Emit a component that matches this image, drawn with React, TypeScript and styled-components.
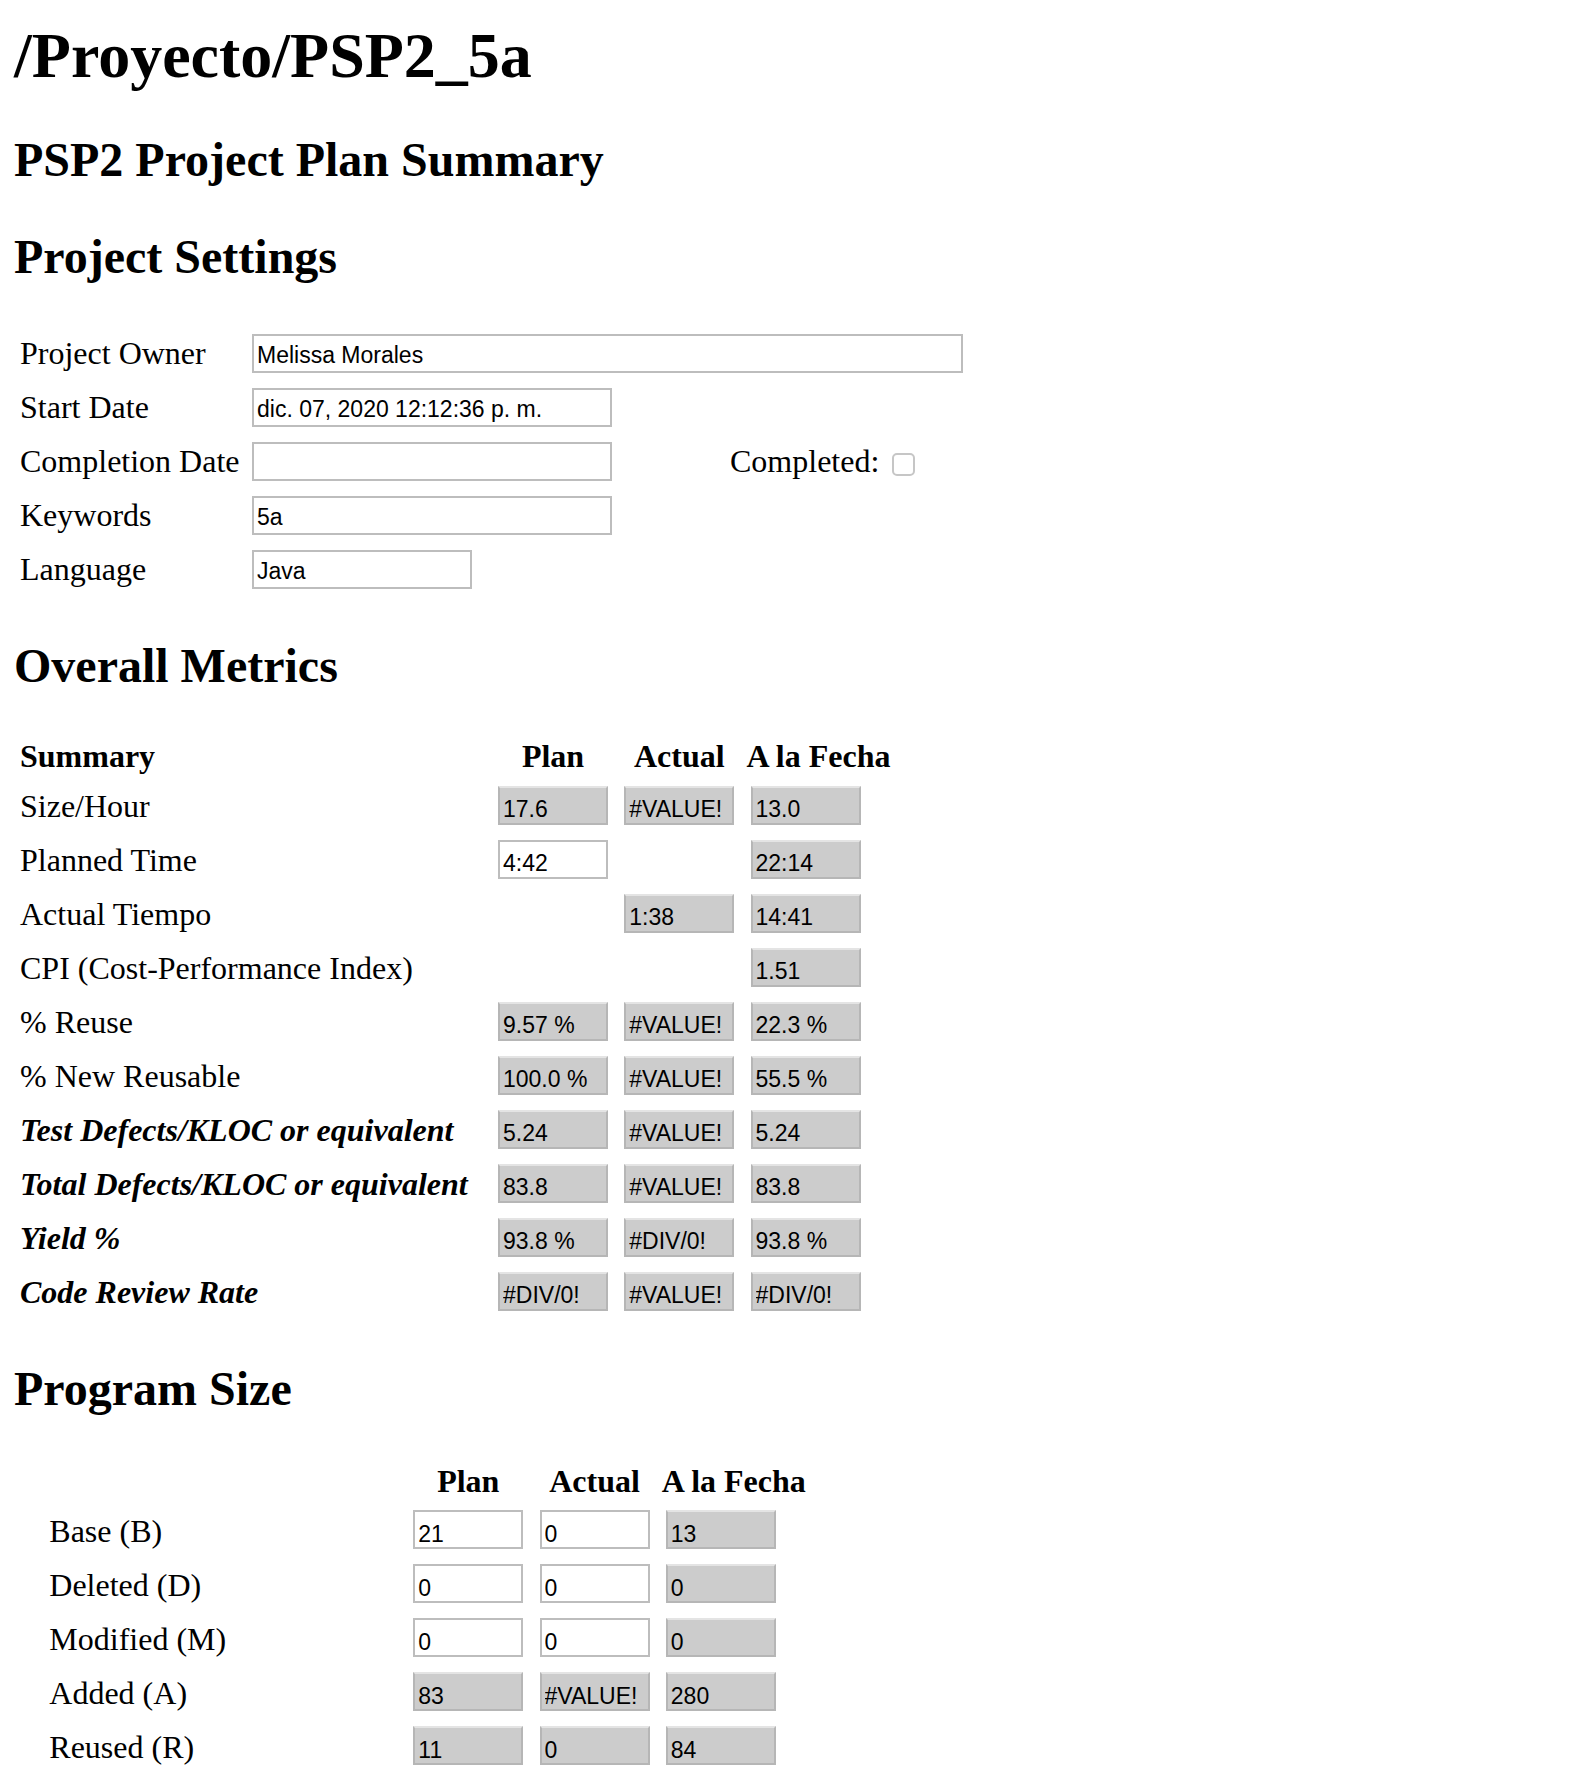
import React from "react";
import styled, { createGlobalStyle } from "styled-components";

const GlobalStyle = createGlobalStyle`
  html, body {
    margin: 0;
    padding: 0;
    background: #ffffff;
  }
  body {
    font-family: "Liberation Serif", "Times New Roman", serif;
    color: #000000;
  }
`;

const Page = styled.div`
  padding: 0 16px;
`;

const Title = styled.h1`
  margin: 20px 0 0 -2px;
  font-size: 64px;
  line-height: 72px;
  font-weight: 700;
`;

const Heading = styled.h2<{ $mt: number }>`
  margin: ${(p) => p.$mt}px 0 0 -2px;
  font-size: 48px;
  line-height: 54px;
  font-weight: 700;
`;

const SettingsGrid = styled.div`
  margin-top: 42px;
  padding-left: 4px;
  display: grid;
  grid-template-columns: 232px 360px auto;
  grid-auto-rows: 54px;
  align-items: center;
  justify-items: start;
  justify-content: start;
`;

const FieldLabel = styled.div`
  font-size: 32px;
  line-height: 36px;
  white-space: nowrap;
`;

const TextField = styled.input<{ $w: number; $span?: boolean }>`
  box-sizing: border-box;
  width: ${(p) => p.$w}px;
  height: 39px;
  margin: 0;
  padding: 7px 3px 2px;
  font-family: "Liberation Sans", Arial, sans-serif;
  font-size: 23px;
  line-height: 26px;
  color: #000;
  background: #fff;
  border: 2px solid #bdbdbd;
  border-radius: 0;
  outline: none;
  grid-column: ${(p) => (p.$span ? "2 / 4" : "auto")};
`;

const CompletedCell = styled.div`
  display: flex;
  align-items: center;
  gap: 13px;
  margin-left: 118px;
  font-size: 32px;
  line-height: 36px;
`;

const Checkbox = styled.input`
  appearance: none;
  -webkit-appearance: none;
  box-sizing: border-box;
  width: 23px;
  height: 23px;
  margin: 6px 0 0;
  border: 2px solid #c6c6c6;
  border-radius: 5px;
  background: #fff;
`;

const DataGrid = styled.div<{ $labelW: number; $indent: number; $headH: number; $mt: number }>`
  margin-top: ${(p) => p.$mt}px;
  padding-left: ${(p) => p.$indent}px;
  display: grid;
  grid-template-columns: ${(p) => p.$labelW}px 118px 118px max-content;
  grid-template-rows: ${(p) => p.$headH}px;
  grid-auto-rows: 54px;
  column-gap: 8.25px;
  align-items: center;
  justify-content: start;
`;

const ColHead = styled.div<{ $left?: boolean }>`
  align-self: start;
  font-size: 32px;
  line-height: 36px;
  font-weight: 700;
  text-align: ${(p) => (p.$left ? "left" : "center")};
  white-space: nowrap;
`;

const RowLabel = styled.div<{ $emph?: boolean }>`
  margin-top: 2px;
  font-size: 32px;
  line-height: 36px;
  white-space: nowrap;
  font-weight: ${(p) => (p.$emph ? 700 : 400)};
  font-style: ${(p) => (p.$emph ? "italic" : "normal")};
`;

const Cell = styled.input<{ $gray: boolean }>`
  box-sizing: border-box;
  width: 110px;
  height: 39px;
  margin: 0 0 0 4px;
  padding: 9px 3px 0;
  font-family: "Liberation Sans", Arial, sans-serif;
  font-size: 23px;
  line-height: 26px;
  color: #000;
  background: ${(p) => (p.$gray ? "#cccccc" : "#ffffff")};
  border: 2px solid ${(p) => (p.$gray ? "#b6b6b6" : "#bdbdbd")};
  border-top-color: ${(p) => (p.$gray ? "#e4e4e4" : "#bdbdbd")};
  border-radius: 0;
  outline: none;
`;

const EmptyCell = styled.div``;

type CellDef = { v: string; gray: boolean } | null;
type RowDef = { label: string; emph?: boolean; cells: CellDef[] };

const g = (v: string): CellDef => ({ v, gray: true });
const w = (v: string): CellDef => ({ v, gray: false });

const metrics: RowDef[] = [
  { label: "Size/Hour", cells: [g("17.6"), g("#VALUE!"), g("13.0")] },
  { label: "Planned Time", cells: [w("4:42"), null, g("22:14")] },
  { label: "Actual Tiempo", cells: [null, g("1:38"), g("14:41")] },
  { label: "CPI (Cost-Performance Index)", cells: [null, null, g("1.51")] },
  { label: "% Reuse", cells: [g("9.57 %"), g("#VALUE!"), g("22.3 %")] },
  { label: "% New Reusable", cells: [g("100.0 %"), g("#VALUE!"), g("55.5 %")] },
  { label: "Test Defects/KLOC or equivalent", emph: true, cells: [g("5.24"), g("#VALUE!"), g("5.24")] },
  { label: "Total Defects/KLOC or equivalent", emph: true, cells: [g("83.8"), g("#VALUE!"), g("83.8")] },
  { label: "Yield %", emph: true, cells: [g("93.8 %"), g("#DIV/0!"), g("93.8 %")] },
  { label: "Code Review Rate", emph: true, cells: [g("#DIV/0!"), g("#VALUE!"), g("#DIV/0!")] },
];

const sizes: RowDef[] = [
  { label: "Base (B)", cells: [w("21"), w("0"), g("13")] },
  { label: "Deleted (D)", cells: [w("0"), w("0"), g("0")] },
  { label: "Modified (M)", cells: [w("0"), w("0"), g("0")] },
  { label: "Added (A)", cells: [g("83"), g("#VALUE!"), g("280")] },
  { label: "Reused (R)", cells: [g("11"), g("0"), g("84")] },
];

function Rows({ rows }: { rows: RowDef[] }) {
  return (
    <>
      {rows.map((r) => (
        <React.Fragment key={r.label}>
          <RowLabel $emph={r.emph}>{r.label}</RowLabel>
          {r.cells.map((c, i) =>
            c ? (
              <div key={i}>
                <Cell $gray={c.gray} value={c.v} readOnly />
              </div>
            ) : (
              <EmptyCell key={i} />
            )
          )}
        </React.Fragment>
      ))}
    </>
  );
}

export default function App() {
  return (
    <>
      <GlobalStyle />
      <Page>
        <Title>/Proyecto/PSP2_5a</Title>
        <Heading $mt={41}>PSP2 Project Plan Summary</Heading>
        <Heading $mt={43}>Project Settings</Heading>

        <SettingsGrid>
          <FieldLabel>Project Owner</FieldLabel>
          <TextField $w={711} $span value="Melissa Morales" readOnly />

          <FieldLabel>Start Date</FieldLabel>
          <TextField $w={360} value="dic. 07, 2020 12:12:36 p. m." readOnly />
          <EmptyCell />

          <FieldLabel>Completion Date</FieldLabel>
          <TextField $w={360} value="" readOnly />
          <CompletedCell>
            <span>Completed:</span>
            <Checkbox type="checkbox" readOnly />
          </CompletedCell>

          <FieldLabel>Keywords</FieldLabel>
          <TextField $w={360} value="5a" readOnly />
          <EmptyCell />

          <FieldLabel>Language</FieldLabel>
          <TextField $w={220} value="Java" readOnly />
          <EmptyCell />
        </SettingsGrid>

        <Heading $mt={42.5}>Overall Metrics</Heading>
        <DataGrid $labelW={465.75} $indent={4} $headH={40.6} $mt={45.4}>
          <ColHead $left>Summary</ColHead>
          <ColHead>Plan</ColHead>
          <ColHead>Actual</ColHead>
          <ColHead>A la Fecha</ColHead>
          <Rows rows={metrics} />
        </DataGrid>

        <Heading $mt={43.3}>Program Size</Heading>
        <DataGrid $labelW={351.75} $indent={33.3} $headH={40.1} $mt={47.1}>
          <ColHead $left></ColHead>
          <ColHead>Plan</ColHead>
          <ColHead>Actual</ColHead>
          <ColHead>A la Fecha</ColHead>
          <Rows rows={sizes} />
        </DataGrid>
      </Page>
    </>
  );
}
